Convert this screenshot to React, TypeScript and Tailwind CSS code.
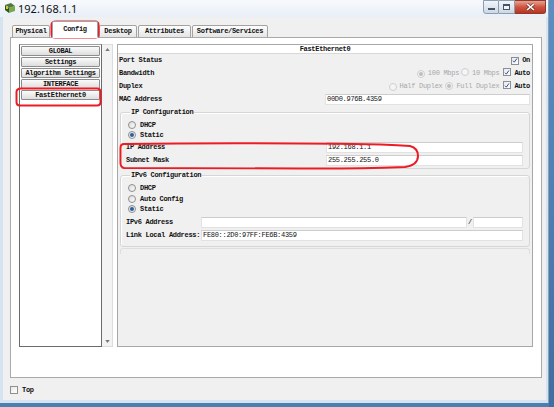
import React from "react";

const mono = "font-['Liberation_Mono','DejaVu_Sans_Mono',monospace] text-[7px] tracking-[-0.3px] font-bold";

function Radio({ checked, disabled }: { checked?: boolean; disabled?: boolean }) {
  return (
    <span
      className={`inline-flex shrink-0 items-center justify-center w-[8px] h-[8px] rounded-full border ${
        disabled ? "border-[#cfcfcf] bg-[#f4f4f4]" : "border-[#8f8f8f] bg-gradient-to-br from-[#dcdcdc] to-[#fbfbfb]"
      }`}
    >
      {checked && (
        <span className={`w-[4px] h-[4px] rounded-full ${disabled ? "bg-[#bdbdbd]" : "bg-[#2d5f99]"}`} />
      )}
    </span>
  );
}

function Check({ checked }: { checked?: boolean }) {
  return (
    <span className="inline-flex shrink-0 items-center justify-center w-[8px] h-[8px] border border-[#8e8f8f] bg-gradient-to-br from-[#e9e9e9] to-white">
      {checked && (
        <svg viewBox="0 0 8 8" className="w-[7px] h-[7px]">
          <path d="M1.4 4.3 L3.1 6.2 L6.6 1.3" stroke="#1d4cb5" strokeWidth="1.3" fill="none" />
        </svg>
      )}
    </span>
  );
}

function Field({ value, w }: { value?: string; w: string }) {
  return (
    <div className={`${w} h-[11px] shrink-0 bg-white border border-[#e2e2e2] border-t-[#cdcdcd] flex items-center pl-[1px] font-normal`}>
      {value}
    </div>
  );
}

function ListButton({ label }: { label: string }) {
  return (
    <div className="h-[10px] mb-[1px] flex items-center justify-center border border-[#8d8d8d] rounded-[1px] bg-gradient-to-b from-[#fbfbfb] to-[#dedede] text-[#111]">
      {label}
    </div>
  );
}

function Tab({ label, w, active }: { label: string; w: string; active?: boolean }) {
  return (
    <div
      className={`${w} flex items-center justify-center border border-[#a3a3a3] rounded-t-[2px] ${
        active ? "h-[17px] bg-white border-b-white relative z-10" : "h-[13px] bg-gradient-to-b from-[#fdfdfd] to-[#e5e5e5]"
      }`}
    >
      {label}
    </div>
  );
}

function Row({ children }: { children: React.ReactNode }) {
  return <div className="h-[13px] flex items-center justify-between pl-[1px] pr-[2px]">{children}</div>;
}

export default function App() {
  return (
    <div className="w-[554px] h-[407px] flex bg-[#4a7fb0] overflow-hidden">
      <div className="w-[549px] h-[403px] flex flex-col bg-[#d6e3f1] border-r border-[#8aa0b8] shrink-0">
        {/* title bar */}
        <div className="h-[17px] flex items-start bg-gradient-to-b from-[#f7f9fc] to-[#e9eff7] shrink-0">
          <svg viewBox="0 0 12 12" className="w-[12px] h-[12px] ml-[4px] mt-[2px]">
            <path d="M1 3 L7 1 L11 4 L5 6 Z" fill="#4f7a3a" />
            <path d="M1 3 L5 6 L5 11 L1 8 Z" fill="#2f5426" />
            <path d="M5 6 L11 4 L11 9 L5 11 Z" fill="#7aa84c" />
            <rect x="2" y="4" width="2" height="3" fill="#e2c230" />
          </svg>
          <span className="ml-[2px] mt-[2px] text-[11px] leading-[13px] text-[#111] font-['Noto_Sans',sans-serif]">192.168.1.1</span>
          <div className="ml-auto mr-[2px] flex">
            <div className="w-[16px] h-[14px] border border-[#8d9db1] rounded-bl-[3px] bg-gradient-to-b from-[#f2f5f9] to-[#cdd7e3] flex items-center justify-center">
              <span className="w-[7px] h-[2px] bg-white border border-[#44546a] mt-[4px]" />
            </div>
            <div className="w-[16px] h-[14px] border border-l-0 border-[#8d9db1] bg-gradient-to-b from-[#f2f5f9] to-[#cdd7e3] flex items-center justify-center">
              <span className="w-[7px] h-[6px] border border-[#44546a] border-t-2 bg-white/60" />
            </div>
            <div className="w-[31px] h-[14px] border border-l-0 border-[#8a3a30] rounded-br-[3px] bg-gradient-to-b from-[#e8a191] via-[#cf5440] to-[#b9351f] flex items-center justify-center">
              <svg viewBox="0 0 8 7" className="w-[9px] h-[8px]">
                <path d="M1 1 L7 6 M7 1 L1 6" stroke="#3a1a14" strokeWidth="2.4" />
                <path d="M1 1 L7 6 M7 1 L1 6" stroke="#fff" strokeWidth="1.4" />
              </svg>
            </div>
          </div>
        </div>

        {/* client */}
        <div className={`flex-1 ml-[3px] mr-[2px] mb-[3px] bg-[#f0f0f0] flex flex-col ${mono} text-[#111]`}>
          <div className="flex items-end pl-[9px] pt-[4px] h-[21px]">
            <Tab label="Physical" w="w-[38px]" />
            <div className="ml-[2px]">
              <Tab label="Config" w="w-[46px]" active />
            </div>
            <div className="ml-[1px]">
              <Tab label="Desktop" w="w-[38px]" />
            </div>
            <div className="ml-[1px]">
              <Tab label="Attributes" w="w-[53px]" />
            </div>
            <div className="ml-[1px]">
              <Tab label="Software/Services" w="w-[76px]" />
            </div>
          </div>

          {/* tab panel */}
          <div className="ml-[7px] -mt-[1px] w-[532px] h-[341px] border border-[#a9a9a9] bg-white pl-[8px] pt-[6px] flex items-start">
            {/* list */}
            <div className="w-[83px] h-[303px] border border-[#6b6b6b] border-t-[#a0a0a0] bg-white p-[1px] pt-[1px]">
              <ListButton label="GLOBAL" />
              <ListButton label="Settings" />
              <ListButton label="Algorithm Settings" />
              <ListButton label="INTERFACE" />
              <ListButton label="FastEthernet0" />
            </div>
            {/* scrollbar */}
            <div className="w-[11px] h-[303px] bg-[#f3f3f3] border border-l-0 border-[#dcdcdc] flex flex-col items-center justify-between py-[3px]">
              <svg viewBox="0 0 6 4" className="w-[5px] h-[3px]">
                <path d="M0 4 L3 0 L6 4 Z" fill="#7a7a7a" />
              </svg>
              <svg viewBox="0 0 6 4" className="w-[5px] h-[3px]">
                <path d="M0 0 L3 4 L6 0 Z" fill="#7a7a7a" />
              </svg>
            </div>

            {/* right panel */}
            <div className="ml-[4px] w-[416px] h-[303px] border border-[#a7a7a7] bg-[#f0f0f0] flex flex-col">
              <div className="h-[9px] bg-white border-b border-[#d8d8d8] flex items-center justify-center">FastEthernet0</div>
              <Row>
                <span>Port Status</span>
                <span className="flex items-center gap-[3px]">
                  <Check checked />
                  <span>On</span>
                </span>
              </Row>
              <Row>
                <span>Bandwidth</span>
                <span className="flex items-center">
                  <Radio checked disabled />
                  <span className="ml-[3px] text-[#a8a8a8] font-normal">100 Mbps</span>
                  <span className="ml-[2px]"><Radio disabled /></span>
                  <span className="ml-[3px] text-[#a8a8a8] font-normal">10 Mbps</span>
                  <span className="ml-[4px]"><Check checked /></span>
                  <span className="ml-[3px]">Auto</span>
                </span>
              </Row>
              <Row>
                <span>Duplex</span>
                <span className="flex items-center">
                  <Radio disabled />
                  <span className="ml-[3px] text-[#a8a8a8] font-normal">Half Duplex</span>
                  <span className="ml-[3px]"><Radio checked disabled /></span>
                  <span className="ml-[3px] text-[#a8a8a8] font-normal">Full Duplex</span>
                  <span className="ml-[4px]"><Check checked /></span>
                  <span className="ml-[3px]">Auto</span>
                </span>
              </Row>
              <Row>
                <span>MAC Address</span>
                <Field value="00D0.976B.4359" w="w-[205px]" />
              </Row>

              <fieldset className="mx-[2px] mt-[2px] border border-[#d6d6d6] rounded-[3px] shadow-[inset_1px_1px_0_#fff] pl-[5px] pr-[6px] pb-[2px]">
                <legend className="ml-[4px] px-[1px] leading-[8px]">IP Configuration</legend>
                <div className="pt-[4px]">
                  <div className="h-[10px] flex items-center pl-[2px]">
                    <Radio />
                    <span className="ml-[4px]">DHCP</span>
                  </div>
                  <div className="h-[10px] flex items-center pl-[2px]">
                    <Radio checked />
                    <span className="ml-[4px]">Static</span>
                  </div>
                  <div className="mt-[2px] flex items-center">
                    <span className="w-[200px]">IP Address</span>
                    <Field value="192.168.1.1" w="w-[197px]" />
                  </div>
                  <div className="mt-[2px] flex items-center">
                    <span className="w-[200px]">Subnet Mask</span>
                    <Field value="255.255.255.0" w="w-[197px]" />
                  </div>
                </div>
              </fieldset>

              <fieldset className="mx-[2px] mt-[2px] border border-[#d6d6d6] rounded-[3px] shadow-[inset_1px_1px_0_#fff] pl-[5px] pr-[6px] pb-[5px]">
                <legend className="ml-[4px] px-[1px] leading-[8px]">IPv6 Configuration</legend>
                <div className="pt-[4px]">
                  <div className="h-[10.5px] flex items-center pl-[2px]">
                    <Radio />
                    <span className="ml-[4px]">DHCP</span>
                  </div>
                  <div className="h-[10.5px] flex items-center pl-[2px]">
                    <Radio />
                    <span className="ml-[4px]">Auto Config</span>
                  </div>
                  <div className="h-[10.5px] flex items-center pl-[2px]">
                    <Radio checked />
                    <span className="ml-[4px]">Static</span>
                  </div>
                  <div className="mt-[2px] flex items-center">
                    <span className="w-[75px]">IPv6 Address</span>
                    <Field w="w-[266px]" />
                    <span className="w-[6px] text-center font-normal">/</span>
                    <Field w="w-[50px]" />
                  </div>
                  <div className="mt-[2px] flex items-center">
                    <span className="w-[75px] whitespace-nowrap">Link Local Address:</span>
                    <Field value="FE80::2D0:97FF:FE6B:4359" w="w-[322px]" />
                  </div>
                </div>
              </fieldset>
              <div className="mx-[2px] mt-[1px] h-[6px] border-t border-x border-[#dedede] rounded-t-[3px]" />
            </div>
          </div>

          {/* bottom */}
          <div className="mt-[7px] ml-[7px] flex items-center gap-[4px]">
            <Check />
            <span>Top</span>
          </div>
        </div>
      </div>
      <div className="flex-1 bg-gradient-to-b from-[#5b8fc2] to-[#3f6f9f]" />

      {/* annotations */}
      <svg className="absolute left-0 top-0 w-[554px] h-[407px] pointer-events-none" viewBox="0 0 554 407">
        <g stroke="#ec1c24" strokeWidth="2" fill="none" strokeLinejoin="round">
          <path d="M56 21.5 H95 Q98.5 21.5 98.5 25 V34 Q98.5 37.5 95 37.5 H55 Q51.5 37.5 51.5 34 V25 Q51.5 21.5 56 21.5 Z" />
          <path d="M21 88.5 H97 Q100.5 88.5 100.5 92 V102 Q100.5 105.5 97 105.5 H20 Q16.5 105.5 16.5 102 V92 Q16.5 88.5 21 88.5 Z" />
          <path d="M124 144 Q200 143 300 143.5 Q380 143.5 410 146 Q418 148 418 156 Q418 165 405 167 Q350 169 300 168.5 L124 168 Q120.5 167 120.5 163 V148 Q120.5 144 124 144 Z" />
        </g>
      </svg>
    </div>
  );
}
